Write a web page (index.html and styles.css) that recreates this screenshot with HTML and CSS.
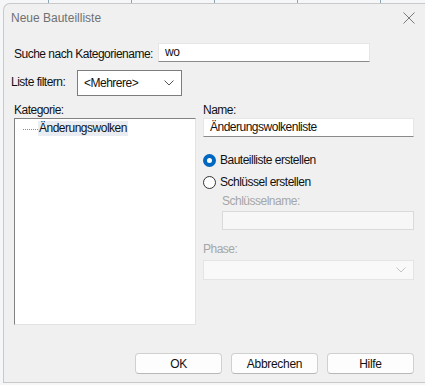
FILE: index.html
```html
<!DOCTYPE html>
<html lang="de">
<head>
<meta charset="UTF-8">
<title>Neue Bauteilliste</title>
<link rel="stylesheet" href="styles.css">
</head>
<body>

<div class="dialog">

<div class="titlebar">
<span class="title">Neue Bauteilliste</span>
<svg class="close" width="12" height="12" viewBox="0 0 12 12">
<path d="M0.5 0.5 L11.5 11.5 M11.5 0.5 L0.5 11.5" stroke="#7a7a7a" stroke-width="1" fill="none"/>
</svg>
</div>

<div class="content">

<div class="row search-row">
<label class="search-label">Suche nach Kategoriename:</label>
<div class="textbox search-box">wo</div>
</div>

<div class="row filter-row">
<label class="filter-label">Liste filtern:</label>
<div class="combo">
<span>&lt;Mehrere&gt;</span>
<svg width="10" height="6" viewBox="0 0 10 6"><path d="M0.5 0.5 L5 5 L9.5 0.5" stroke="#555" fill="none"/></svg>
</div>
</div>

<div class="columns">

<div class="col-left">
<label>Kategorie:</label>
<div class="listbox">
<div class="tree-item">
<span class="dots"></span>
<span class="item-text">Änderungswolken</span>
</div>
</div>
</div>

<div class="col-right">
<label>Name:</label>
<div class="textbox">Änderungswolkenliste</div>

<div class="radios">
<div class="radio-row">
<span class="radio checked"></span>
<span>Bauteilliste erstellen</span>
</div>
<div class="radio-row">
<span class="radio"></span>
<span>Schlüssel erstellen</span>
</div>
</div>

<div class="key-block">
<label class="disabled">Schlüsselname:</label>
<div class="textbox off"></div>
</div>

<label class="disabled phase-label">Phase:</label>
<div class="combo off wide">
<span></span>
<svg width="10" height="6" viewBox="0 0 10 6"><path d="M0.5 0.5 L5 5 L9.5 0.5" stroke="#c4c4c4" fill="none"/></svg>
</div>
</div>

</div>

<div class="buttons">
<button>OK</button>
<button>Abbrechen</button>
<button>Hilfe</button>
</div>

</div>

</div>

</body>
</html>
```

FILE: styles.css
```css
* {
    box-sizing: border-box;
}

body {
    margin: 0;
    width: 425px;
    height: 385px;
    overflow: hidden;
    font-family: "Liberation Sans", Arial, sans-serif;
    font-size: 12px;
    letter-spacing: -0.5px;
    color: #111;
    background: #f4f6f8;
    background-image: repeating-linear-gradient(90deg, transparent 0, transparent 48px, #8aa4b8 48px, #8aa4b8 49px, transparent 49px, transparent 83px);
    background-size: 100% 3px;
    background-repeat: no-repeat;
}

label {
    white-space: nowrap;
}

.dialog {
    margin: 3px 0 0 3px;
    height: 380px;
    background: #f0f0f0;
    border: 1px solid #c9c9c9;
    border-right: none;
    border-radius: 7px 0 0 0;
    display: flex;
    flex-direction: column;
}

.titlebar {
    height: 28px;
    flex-shrink: 0;
    display: flex;
    align-items: center;
    justify-content: space-between;
    padding: 0 10px 0 7px;
}

.title {
    color: #707070;
    letter-spacing: 0;
}

.content {
    flex: 1;
    display: flex;
    flex-direction: column;
    padding: 11px 11px 0 9px;
}

.row {
    display: flex;
    align-items: center;
}

.search-label {
    width: 145px;
    padding-left: 1px;
    margin-top: 2px;
}

.textbox {
    height: 19px;
    line-height: 17px;
    padding: 0 6px;
    background: #fff;
    border: 1px solid #e6e6e6;
    border-bottom-color: #8a8a8a;
}

.search-box {
    width: 212px;
}

.filter-row {
    margin-top: 8px;
}

.filter-label {
    width: 66px;
    margin: -3px 0 0 -2px;
}

.combo {
    width: 105px;
    height: 26px;
    padding: 0 7px 0 6px;
    display: flex;
    align-items: center;
    justify-content: space-between;
    background: #fff;
    border: 1px solid #7d7d7d;
}

.columns {
    display: flex;
    gap: 7px;
    margin-top: 7px;
}

.col-left {
    width: 183px;
    padding-left: 1px;
}

.col-right {
    flex: 1;
}

.col-left label,
.col-right > label {
    display: block;
    height: 15px;
}

.listbox {
    height: 207px;
    background: #fff;
    border: 1px solid #e3e3e3;
    border-top-color: #828282;
    border-left-color: #828282;
    padding-top: 2px;
}

.tree-item {
    display: flex;
    align-items: center;
    height: 15px;
    padding-left: 8px;
}

.dots {
    width: 15px;
    border-top: 1px dotted #8c8c8c;
    margin-top: 2px;
}

.item-text {
    background: #e9edf1;
    padding: 0 1px;
    line-height: 15px;
}

.radios {
    margin-top: 12px;
}

.radio-row {
    display: flex;
    align-items: center;
    gap: 4px;
    height: 22px;
}

.radio {
    width: 13px;
    height: 13px;
    border-radius: 50%;
    border: 1px solid #333;
    background: #fff;
}

.radio.checked {
    border: 4px solid #0067c0;
    background: #fff;
}

.key-block {
    margin: 1px 0 0 19px;
}

.key-block label {
    display: block;
    height: 15px;
}

.disabled {
    color: #a6a6a6;
}

.textbox.off {
    background: #f7f7f7;
    border: 1px solid #dadada;
    margin-top: 2px;
}

.phase-label {
    margin-top: 12px;
}

.combo.wide {
    width: auto;
    height: 20px;
    margin-top: 3px;
}

.combo.off {
    background: #f9f9f9;
    border-color: #e4e4e4;
}

.buttons {
    margin-top: auto;
    margin-bottom: 8px;
    display: flex;
    justify-content: flex-end;
    gap: 9px;
}

button {
    width: 87px;
    height: 21px;
    font-family: inherit;
    font-size: 12px;
    letter-spacing: -0.3px;
    color: #111;
    background: #fdfdfd;
    border: 1px solid #d0d0d0;
    border-bottom-color: #b8b8b8;
    border-radius: 4px;
}
```
